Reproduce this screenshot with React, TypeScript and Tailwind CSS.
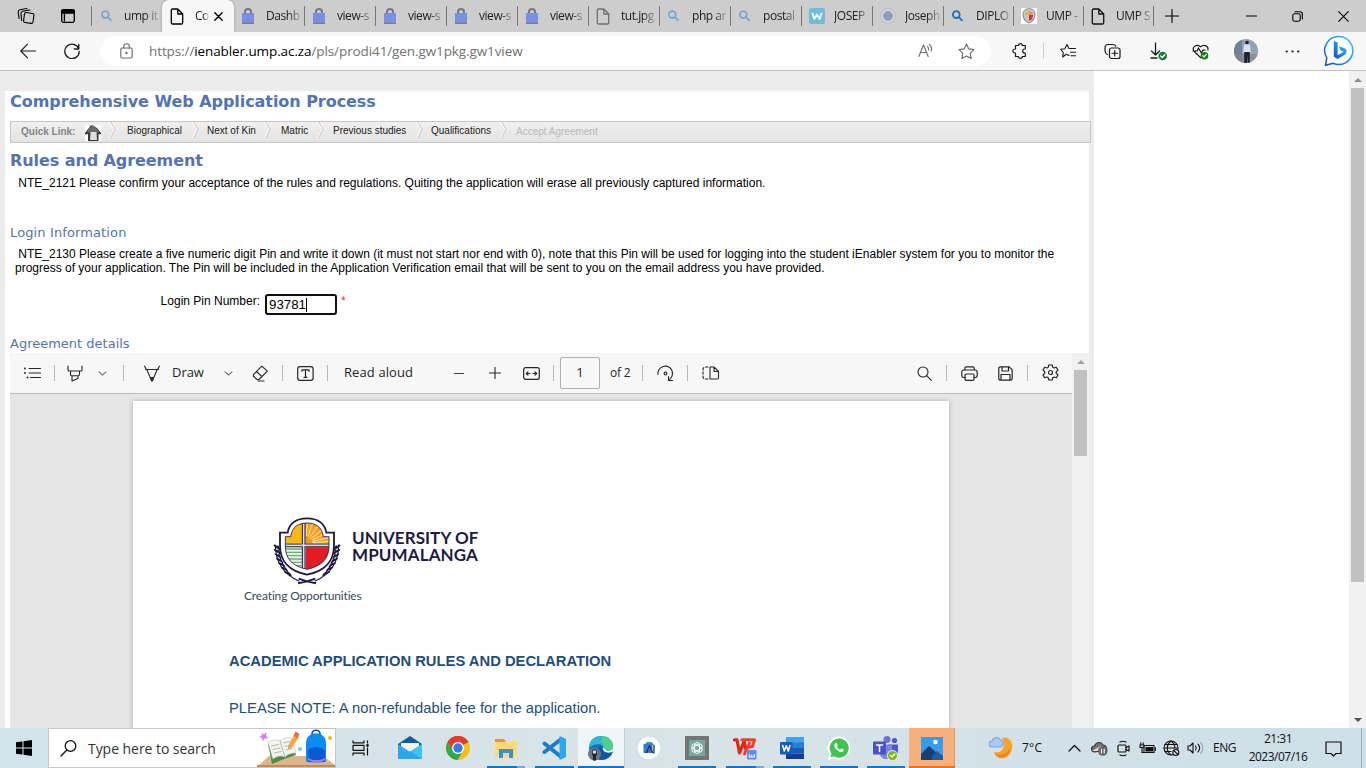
import React from "react";

type IcProps = { w: number; h?: number; vb?: string; className?: string; sw?: number; children: React.ReactNode };

const Ic = ({ w, h, vb, className = "", sw = 1.1, children }: IcProps) => (
  <svg
    width={w}
    height={h ?? w}
    viewBox={vb ?? `0 0 ${w} ${h ?? w}`}
    fill="none"
    stroke="currentColor"
    strokeWidth={sw}
    strokeLinecap="round"
    strokeLinejoin="round"
    className={`block shrink-0 ${className}`}
  >
    {children}
  </svg>
);

/* ---------- Tab strip ---------- */

const SearchFav = ({ color }: { color: string }) => (
  <Ic w={14} sw={1.8} className={color}>
    <circle cx="5.3" cy="5.6" r="3.4" />
    <path d="M8.1 8.4l2.9 2.9" />
  </Ic>
);
const BagFav = () => (
  <Ic w={14} h={17}>
    <path d="M4 6V4a3 3 0 0 1 6 0v2" stroke="#76767c" strokeWidth="2" />
    <rect x="1" y="5" width="12" height="9.5" fill="#7690e4" stroke="none" />
    <rect x="1" y="14.3" width="12" height="1.7" fill="#7d7d84" stroke="none" />
  </Ic>
);
const PageFav = ({ className = "" }: { className?: string }) => (
  <Ic w={14} h={17} sw={1.3} className={className}>
    <path d="M1.3 2.3a1.300 1.300 0 0 1 1.300-1.300h5.200L12.700 6v8.700a1.300 1.300 0 0 1-1.300 1.300H2.600a1.300 1.300 0 0 1-1.300-1.300z M7.800 1.200V6h4.700" />
  </Ic>
);
const WFav = () => (
  <Ic w={16} sw={1.9}>
    <rect width="16" height="16" rx="2" fill="#74bbd9" stroke="none" />
    <path d="M3.500 5.500l1.800 5.500L8 6.500l2.700 4.500 1.800-5.500" stroke="#e8f6fb" />
  </Ic>
);
const GlobeFav = () => (
  <Ic w={16}>
    <circle cx="8" cy="8" r="7.2" fill="#dcdcdc" stroke="#b4bcc4" />
    <circle cx="8" cy="8" r="5" fill="#8aa0b8" stroke="none" />
  </Ic>
);
const CrestFav = () => (
  <Ic w={16}>
    <rect width="16" height="16" fill="#fff" stroke="none" />
    <path d="M2 6c0-7 12-7 12 0 0 6-3 8-6 9-3-1-6-3-6-9z" fill="#c9c6cc" stroke="#8d8ba0" />
    <path d="M8 3v4H4c0-3 2-4 4-4z" fill="#e8b04a" stroke="none" />
    <path d="M8 7h4c0 4-2 5-4 6z" fill="#e0302c" stroke="none" />
    <path d="M8 3c2 0 4 1 4 4H8z" fill="#f0935a" stroke="none" />
  </Ic>
);

type Tab = { icon: React.ReactNode; text: string; w: string };
const tabs: Tab[] = [
  { icon: <BagFav />, text: "Dashb", w: "w-[71px]" },
  { icon: <BagFav />, text: "view-s", w: "w-[71px]" },
  { icon: <BagFav />, text: "view-s", w: "w-[71px]" },
  { icon: <BagFav />, text: "view-s", w: "w-[71px]" },
  { icon: <BagFav />, text: "view-s", w: "w-[71px]" },
  { icon: <PageFav className="text-[#6f6f6f]" />, text: "tut.jpg", w: "w-[71px]" },
  { icon: <SearchFav color="text-[#7ba7cc]" />, text: "php ar", w: "w-[71px]" },
  { icon: <SearchFav color="text-[#7ba7cc]" />, text: "postal", w: "w-[71px]" },
  { icon: <WFav />, text: "JOSEP", w: "w-[71px]" },
  { icon: <GlobeFav />, text: "Joseph", w: "w-[71px]" },
  { icon: <SearchFav color="text-[#1a6fc4]" />, text: "DIPLO", w: "w-[70px]" },
  { icon: <CrestFav />, text: "UMP -", w: "w-[70px]" },
  { icon: <PageFav className="text-[#111]" />, text: "UMP S", w: "w-[70px]" },
];

const fade = "[mask-image:linear-gradient(to_right,#000_60%,transparent_105%)]";

const TabStrip = () => (
  <div className="flex h-8 items-stretch bg-[#cdcdcd] text-[12px] tracking-[-0.45px] text-[#222]">
    <div className="flex w-[91px] items-center text-black">
      <Ic w={18} className="ml-[17px]" sw={1.1}>
        <rect x="7" y="6" width="9.5" height="10" rx="1.6" transform="rotate(8 12 11)" />
        <path d="M4.6 13.5L4 6.500c0-1.200.5-1.900 1.600-2.200l7.400-1.300M2 11.500L1.200 5c0-1.200.5-1.900 1.600-2.200L10 1.500" />
      </Ic>
      <Ic w={14} h={14} className="ml-[26px]" sw={1.300}>
        <rect x=".7" y=".7" width="12.600" height="12.600" rx="1.500" />
        <path d="M.7 1.500h12.600v2.700H.7z" fill="currentColor" />
        <path d="M3.400 5v7" />
      </Ic>
    </div>
    <div className="flex w-[71px] items-center">
      <div className="h-5 w-px bg-[#777]" />
      <div className="ml-[8px] w-[14px]"><SearchFav color="text-[#7ba7cc]" /></div>
      <div className={`ml-[10px] w-[35px] whitespace-nowrap ${fade}`}>ump it</div>
    </div>
    <div className="flex w-[72px] items-center rounded-t-[7px] bg-[#f7f7f7] shadow-[0_0_3px_rgba(0,0,0,0.25)]">
      <div className="ml-2 w-[14px] text-black"><PageFav /></div>
      <div className={`ml-[11px] w-[14px] whitespace-nowrap ${fade}`}>Co</div>
      <Ic w={9} className="ml-[5px] text-black" sw={1.400}>
        <path d="M.8.8l7.400 7.400M8.200.8L.8 8.200" />
      </Ic>
    </div>
    {tabs.map((t, i) => (
      <div key={i} className={`flex shrink-0 items-center ${t.w}`}>
        <div className="ml-[7px] flex w-[16px] shrink-0">{t.icon}</div>
        <div className={`ml-[9px] w-[36px] shrink-0 whitespace-nowrap ${fade}`}>{t.text}</div>
        <div className="ml-auto h-5 w-px bg-[#777]" />
      </div>
    ))}
    <div className="flex flex-1 items-center text-black">
      <Ic w={14} className="ml-[11px]"><path d="M7 .5v13M.5 7h13" /></Ic>
      <Ic w={11} h={2} className="ml-[67px]"><path d="M.5 1h10" /></Ic>
      <Ic w={11} className="ml-[35px]">
        <rect x=".8" y="2.800" width="7.400" height="7.400" rx="1.600" />
        <path d="M3 .8h5a2.300 2.300 0 0 1 2.300 2.300V8" />
      </Ic>
      <Ic w={11} className="ml-[35px]"><path d="M.7.7l9.600 9.600M10.300.7L.7 10.300" /></Ic>
    </div>
  </div>
);

/* ---------- Address bar ---------- */

const AddressBar = () => (
  <div className="flex h-[39px] items-center border-b border-[#c2c2c2] bg-[#f7f7f7] text-[#1a1a1a]">
    <Ic w={16} className="ml-[20px]"><path d="M15.500 8H.8M7.500 1.200L.8 8l6.700 6.800" /></Ic>
    <Ic w={16} className="ml-[28px]" sw={1.300}>
      <path d="M14.800 6A7.200 7.200 0 1 0 15.200 8.300M14.800 1.500V6h-4.500" />
    </Ic>
    <div className="ml-[20px] flex h-[30px] w-[891px] items-center rounded-full bg-white">
      <Ic w={13} h={16} className="ml-[20px] text-[#666]">
        <rect x=".8" y="5" width="11.400" height="10" rx="1.500" />
        <path d="M3.700 5V3.500a2.800 2.800 0 0 1 5.600 0V5" />
        <circle cx="6.500" cy="10" r=".6" fill="currentColor" />
      </Ic>
      <div className="ml-[16px] whitespace-nowrap text-[13.500px] leading-[18px] tracking-[-0.1px] text-[#717171]">
        https://<span className="text-black">ienabler.ump.ac.za</span>/pls/prodi41/gen.gw1pkg.gw1view
      </div>
      <Ic w={17} h={16} className="ml-auto text-[#6b6b6b]">
        <path d="M.8 13.500L5.500 2l4.700 11.500M2.500 9.500h6M9.500 3.500c1 .8 1.300 2 1 3.500M11.300 1.500c2 1.500 2.600 4 1.800 6.500" />
      </Ic>
      <Ic w={17} className="ml-[23px] mr-[16px] text-[#6b6b6b]">
        <path d="M8.500 1l2.300 4.900 5.200.7-3.800 3.700.9 5.300-4.600-2.500-4.600 2.500.9-5.300L1 6.600l5.200-.7z" />
      </Ic>
    </div>
    <Ic w={16} className="ml-[21px]" sw={1.200}>
      <path d="M3.500 2.500h3a1.900 1.900 0 0 1 3.800 0h3V6h-.6a2 2 0 0 0 0 4h.6v3.500h-3a1.900 1.900 0 0 1-3.800 0h-3V10h-.6a2 2 0 0 1 0-4h.6z" />
    </Ic>
    <div className="ml-[15px] h-4 w-px bg-[#cfcfcf]" />
    <Ic w={17} className="ml-[16px]">
      <path d="M9 12.500L6.300 11.200 2.700 14l.6-4.500L.8 6.300l4-.6L7 1.500l2 4h6.500M10.500 9.200h5.200M11 12.800h4.700" />
    </Ic>
    <Ic w={17} className="ml-[27px]" sw={1.200}>
      <rect x="5.500" y="5" width="10.500" height="10.500" rx="2" />
      <path d="M10.750 7.500v5.500M8 10.250h5.500M3.300 11.500C1.500 10.500 1 9 1 7.500V4.500A3 3 0 0 1 4 1.500h5c1.500 0 2.300.8 2.800 1.800" />
    </Ic>
    <Ic w={18} h={19} className="ml-[29px]" sw={1.300}>
      <path d="M5.500 1v12M1.500 9l4 4 4-4M1 16h6" />
      <circle cx="12.700" cy="14" r="4.300" fill="#15803d" stroke="none" />
      <path d="M10.700 14l1.500 1.500 2.500-2.800" stroke="#fff" />
    </Ic>
    <Ic w={18} h={17} className="ml-[24px]" sw={1.200}>
      <path d="M8.500 14.500L2 8.300C-.5 4.500 4 .5 8.500 3.800 12.500.5 17 3.500 15.800 7M1 8h4l1.500-3 2.800 5 1.500-2.800H13" />
      <circle cx="12.500" cy="12.700" r="3.800" fill="#107c10" stroke="none" />
      <path d="M10.800 12.700l1.200 1.300 2.300-2.600" stroke="#fff" />
    </Ic>
    <Ic w={24} className="ml-[24px] rounded-full">
      <rect width="24" height="24" fill="#8fa3b6" stroke="none" />
      <path d="M0 0h8v24H0z" fill="#6f8296" stroke="none" />
      <path d="M0 15h24v9H0z" fill="#8a8680" stroke="none" opacity=".6" />
      <circle cx="13" cy="3.500" r="1.800" fill="#251f26" stroke="none" />
      <path d="M10 5.500h6l.8 8.500H9.300z" fill="#d7e2f2" stroke="none" />
      <path d="M10.200 13h5.600v11h-2.100v-8l-.8 8h-2.700z" fill="#1b2135" stroke="none" />
    </Ic>
    <Ic w={15} h={3} className="ml-[27px]"><path d="M1.700 1.500h.1M7.500 1.500h.1M13.200 1.500h.1" strokeWidth="2.200" /></Ic>
    <Ic w={32} className="ml-[23px]">
      <defs>
        <linearGradient id="bg1" x1="0" y1="1" x2="1" y2="0">
          <stop offset="0" stopColor="#1b48c4" /><stop offset=".5" stopColor="#1e8ee6" /><stop offset="1" stopColor="#3cc7ee" />
        </linearGradient>
      </defs>
      <path d="M16.500 1.500a14 14 0 1 1-6.500 26.700L2.500 30.300l1.300-7.500A14 14 0 0 1 16.500 1.500z" fill="#fff" stroke="url(#bg1)" strokeWidth="1.500" />
      <path d="M10.800 6l3.900 1.600v12.600l6-3.400-3-1.400-1.700-4.200 6 2.400c2.200 1.300 2.100 4.500.2 5.800l-7.500 4.700-3.900-2.400z" fill="url(#bg1)" stroke="none" />
    </Ic>
  </div>
);

/* ---------- Web page ---------- */

const Crumb = () => (
  <Ic w={8} h={16} className="mb-[5px]" sw={1}>
    <path d="M1.500.5l4.500 7-4.500 7.500" stroke="#fff" transform="translate(-1 0)" />
    <path d="M2 .5l4 7-4 7.500" stroke="#c9c9c9" />
  </Ic>
);

const crumbs = [
  { text: "Biographical", w: "w-[65px]" },
  { text: "Next of Kin", w: "w-[57px]" },
  { text: "Matric", w: "w-[36px]" },
  { text: "Previous studies", w: "w-[83px]" },
  { text: "Qualifications", w: "w-[69px]" },
];
const gaps = ["ml-[10px]", "ml-[7px]", "ml-[9px]", "ml-[8px]", "ml-[7px]"];

const Sep = ({ className }: { className: string }) => <div className={`h-4 w-px shrink-0 bg-[#b9b9b9] ${className}`} />;
const Chev = ({ className }: { className: string }) => (
  <Ic w={9} h={5} className={className}><path d="M1 .8l3.500 3.200L8 .8" stroke="#777" /></Ic>
);

const PdfToolbar = () => (
  <div className="flex h-[41px] shrink-0 items-center border-b border-[#b9b9b9] bg-[#f7f7f7] text-[13px] text-[#262626]">
    <Ic w={18} h={12} className="ml-[14px]">
      <path d="M5 1.500h11.500M5 6h11.500M6.500 10.500H16.500" />
      <path d="M.9 1.500H1M.9 6H1M3.500 10.500h.1" strokeWidth="1.800" />
    </Ic>
    <Sep className="ml-[12px]" />
    <Ic w={16} h={17} className="ml-[12px]">
      <path d="M1 1v4c0 .6.400 1 1 1h12c.6 0 1-.4 1-1V1M3.500 6v3.500c0 .8.4 1.200 1.200 1.200h6.600c.8 0 1.200-.4 1.200-1.200V6M5 11v5l6-2.500V11" />
    </Ic>
    <Chev className="ml-[15px]" />
    <Sep className="ml-[16px]" />
    <Ic w={16} h={17} className="ml-[20px]">
      <path d="M.6 1.200l1.800 3.300M15.400 1.200l-1.800 3.300M1.500 4.500h13M2.800 4.500L7.500 15.500h1L13.200 4.500" />
      <path d="M6.500 12.500h3L8.300 16h-.6z" fill="#333" />
    </Ic>
    <div className="ml-[12px] w-[33px] whitespace-nowrap tracking-[-0.050px]">Draw</div>
    <Chev className="ml-[19px]" />
    <Ic w={17} className="ml-[19px]">
      <path d="M1.500 9.500L9.800 1.200l5.500 5L7 14.500H5L1.300 11zM4.500 6.500l5.500 5.200M6 16h6" />
    </Ic>
    <Sep className="ml-[13px]" />
    <Ic w={17} h={15} className="ml-[14px]" sw={1.200}>
      <rect x=".7" y=".7" width="15.400" height="13.600" rx="2.300" />
      <path d="M5 5.300V3.800h7v1.500M8.500 3.800v7.500M7 11.300h3" />
    </Ic>
    <Sep className="ml-[13px]" />
    <div className="ml-[16px] w-[70px] whitespace-nowrap tracking-[0.100px]">Read aloud</div>
    <div className="ml-[40px] h-px w-[10px] bg-[#444]" />
    <Ic w={12} className="ml-[25px]"><path d="M6 .5v11M.5 6h11" /></Ic>
    <Ic w={17} h={13} className="ml-[22px]" sw={1.200}>
      <rect x=".7" y=".7" width="15.600" height="11.600" rx="2" />
      <path d="M7 6.500H3.500M5 4.800L3.300 6.500 5 8.200M10 6.500h3.500M12 4.800l1.700 1.700L12 8.200" />
    </Ic>
    <Sep className="ml-[13px]" />
    <div className="ml-[6px] flex h-8 w-10 items-center justify-center rounded-[2px] border border-[#b0b0b0]">1</div>
    <div className="ml-[10px] w-[22px] whitespace-nowrap text-[12px] tracking-[-0.200px]">of 2</div>
    <Sep className="ml-[10px]" />
    <Ic w={17} className="ml-[14px]">
      <path d="M1 9.500A7.300 7.300 0 1 1 12 14.700M11.500 11.500v4h4" />
      <circle cx="8.500" cy="8.500" r="1.400" />
    </Ic>
    <Sep className="ml-[13px]" />
    <Ic w={18} h={14} className="ml-[14px]">
      <path d="M6 1H3.500A2.300 2.300 0 0 0 1 3.500v7A2.300 2.300 0 0 0 3.500 13H6" strokeDasharray="2.500 1.800" />
      <path d="M8 1h4l4.500 4.500V11.500a1.500 1.500 0 0 1-1.500 1.500H8zM12 1v4.500h4.500" />
    </Ic>
    <Ic w={15} className="ml-auto">
      <circle cx="6" cy="6" r="5" /><path d="M9.700 9.700l4.600 4.600" />
    </Ic>
    <Sep className="ml-[14px]" />
    <Ic w={17} h={15} className="ml-[14px]" sw={1.200}>
      <path d="M4 11.500H2.500A1.800 1.800 0 0 1 .8 9.700V6a2 2 0 0 1 2-2h11.400a2 2 0 0 1 2 2v3.700a1.800 1.800 0 0 1-1.700 1.800H13M3.800 4V2.200C3.800 1.300 4.300.8 5.200.8h6.600c.9 0 1.400.5 1.400 1.400V4" />
      <rect x="4" y="8" width="9" height="6.300" rx="1" />
    </Ic>
    <Ic w={15} className="ml-[20px]" sw={1.200}>
      <path d="M2.500.8h8.700l3 3v8.700a1.700 1.700 0 0 1-1.700 1.700h-10A1.700 1.700 0 0 1 .8 12.500v-10A1.700 1.700 0 0 1 2.500.8zM4 1v4h6.500V1M3 14V8.500h9V14" />
    </Ic>
    <Sep className="ml-[14px]" />
    <Ic w={17} className="ml-[14px] mr-[13px] mb-[2px]" sw={1.200}>
      <circle cx="8.500" cy="8.500" r="2" />
      <path d="M6.800 1h3.400l.5 2.200 1.300.8 2.300-.8 1.700 2.900-1.800 1.600v1.600l1.800 1.600-1.700 2.900-2.300-.8-1.300.8-.5 2.200H6.800l-.5-2.200-1.300-.8-2.300.8L1 10.900l1.800-1.600V7.700L1 6.100l1.700-2.900L5 4l1.300-.8z" />
    </Ic>
  </div>
);

const leaves = [0, 1, 2, 3, 4, 5, 6];
const Crest = () => (
  <svg width="72" height="72" viewBox="153 45 216 216" fill="none" className="block shrink-0">
    <path d="M166 134C166 184 190 222 238 244M356 134C356 184 332 222 284 244" stroke="#1d1a45" strokeWidth="3.500" />
    {leaves.map((i) => {
      const y = 140 + i * 13;
      const x = 168 + i * i * 0.9;
      return (
        <g key={i} fill="#1d1a45">
          <ellipse cx={x} cy={y} rx="9" ry="3.200" transform={`rotate(${38 - i * 3} ${x} ${y})`} />
          <ellipse cx={x + 8} cy={y + 4} rx="9" ry="3" transform={`rotate(${65 - i * 3} ${x + 8} ${y + 4})`} />
          <ellipse cx={522 - x} cy={y} rx="9" ry="3.200" transform={`rotate(${-38 + i * 3} ${522 - x} ${y})`} />
          <ellipse cx={514 - x} cy={y + 4} rx="9" ry="3" transform={`rotate(${-65 + i * 3} ${514 - x} ${y + 4})`} />
        </g>
      );
    })}
    <path d="M180 98H203C208 68 232 55 261 55C290 55 314 68 319 98H342V135C342 182 320 212 261 224C202 212 180 182 180 135Z" fill="#fff" stroke="#1d1a45" strokeWidth="5.500" />
    <clipPath id="sh"><path d="M196 110H212C216 80 236 69 261 69C286 69 306 80 310 110H327V138C327 176 306 198 261 208C216 198 196 176 196 138Z" /></clipPath>
    <g clipPath="url(#sh)">
      <path d="M190 60H246V130H190z" fill="#fbb811" />
      <path d="M254 60H332V130H254z" fill="#f6a21b" />
      <path d="M256 130L262 66M256 130L278 70M256 130L294 78M256 130L308 88M256 130L318 100M256 130L328 112M256 130L330 124" stroke="#fff0c8" strokeWidth="2.600" />
      <path d="M256 130V108A22 22 0 0 1 278 130z" fill="#f79a1c" />
      <path d="M190 142H246V212H190z" fill="#e4efe2" />
      <path d="M190 147H246M190 157H246M190 167H246M190 177H246M190 187H246M190 197H246" stroke="#76a883" strokeWidth="4" />
      <path d="M257 142H332V212H257z" fill="#e31b23" />
      <path d="M251 60V212M190 136H332" stroke="#1d1a45" strokeWidth="11" />
      <path d="M251 60V212M190 136H332" stroke="#dcdde6" strokeWidth="5" />
    </g>
    <path d="M196 110H212C216 80 236 69 261 69C286 69 306 80 310 110H327V138C327 176 306 198 261 208C216 198 196 176 196 138Z" stroke="#1d1a45" strokeWidth="2.500" />
    <path d="M234 250Q261 246 286 236M288 250Q261 246 236 236" stroke="#1d1a45" strokeWidth="6" />
  </svg>
);

const WebPage = () => (
  <div className="flex h-[657px] bg-white">
    <div className="h-full w-[1094px] overflow-hidden bg-[#ececec] pl-[5px] pt-[20px]">
      <div className="flex h-[637px] w-[1084px] flex-col bg-white pl-[5px] text-black">
        <h1 className="h-[30px] whitespace-nowrap pt-px font-['DejaVu_Sans',sans-serif] text-[16px] font-bold leading-[20px] tracking-[-0.050px] text-[#5473b3]">
          Comprehensive Web Application Process
        </h1>
        <div className="flex h-[22px] w-[1081px] items-center border border-[#c6c6c6] bg-gradient-to-b from-[#f1efef] to-[#e3e3e2] text-[10px] leading-[12px] text-[#222]">
          <div className="ml-[10px] w-[64px] whitespace-nowrap font-bold text-[#858585]">Quick Link:</div>
          <Ic w={16} className="mt-[2px]">
            <rect width="16" height="16" fill="#fff" stroke="none" />
            <path d="M0 8L5 1.500V.5h3l4 2.500 4 5v1.300h-2.500V16H3V9.300H0z" fill="#383838" stroke="none" />
            <path d="M4 3l4-2.500L12 4l2 3.500H2z" fill="#6b6b6b" stroke="none" />
            <path d="M5.500 7h6l.5 8h-7z" fill="#dedede" stroke="none" />
          </Ic>
          <div className="ml-[8px]"><Crumb /></div>
          {crumbs.map((c, i) => (
            <React.Fragment key={c.text}>
              <div className={`mb-[2px] shrink-0 whitespace-nowrap ${gaps[i]} ${c.w}`}>{c.text}</div>
              <Crumb />
            </React.Fragment>
          ))}
          <div className="ml-[8px] whitespace-nowrap text-[#b9b9b9]">Accept Agreement</div>
        </div>
        <h2 className="mt-[8px] h-[25px] whitespace-nowrap font-['DejaVu_Sans',sans-serif] text-[16px] font-bold leading-[20px] tracking-[-0.080px] text-[#5473b3]">
          Rules and Agreement
        </h2>
        <p className="h-[49px] whitespace-nowrap pl-[5px] text-[12px] leading-[14px]">
          &nbsp;NTE_2121 Please confirm your acceptance of the rules and regulations. Quiting the application will erase all previously captured information.
        </p>
        <h3 className="h-[22px] whitespace-nowrap font-['DejaVu_Sans',sans-serif] text-[13px] leading-[16px] tracking-[0.120px] text-[#5473b3]">Login Information</h3>
        <p className="h-[47px] whitespace-nowrap pl-[5px] text-[12px] leading-[14px]">
          &nbsp;NTE_2130 Please create a five numeric digit Pin and write it down (it must not start nor end with 0), note that this Pin will be used for logging into the student iEnabler system for you to monitor the
          <br />
          progress of your application. The Pin will be included in the Application Verification email that will be sent to you on the email address you have provided.
        </p>
        <div className="flex h-[42px] items-start text-[12px] leading-[14px]">
          <div className="w-[250px] whitespace-nowrap text-right">Login Pin Number:</div>
          <div className="ml-[5px] flex h-[21px] w-[72px] items-center rounded-[3px] border-2 border-[#101010] bg-white pl-[2px] text-[13.300px]">
            93781<span className="h-[14px] w-px bg-black" />
          </div>
          <div className="ml-[4px] text-[#e8343c]">*</div>
        </div>
        <h3 className="h-[17px] whitespace-nowrap font-['DejaVu_Sans',sans-serif] text-[13px] leading-[16px] text-[#5473b3]">Agreement details</h3>
        <div className="flex h-[375px] w-[1079px]">
          <div className="flex w-[1062px] flex-col overflow-hidden bg-[#e6e6e6] font-['Open_Sans','Noto_Sans',sans-serif]">
            <PdfToolbar />
            <div className="ml-[123px] mt-[7px] h-[400px] w-[816px] shrink-0 bg-white pl-[96px] shadow-[0_0_5px_rgba(0,0,0,0.25)]">
              <div className="flex h-[186px] pl-[42px] pt-[114px]">
                <Crest />
                <div className="ml-[9px] mt-[14px] flex flex-col whitespace-nowrap font-['Lato',sans-serif] text-[17px] font-bold leading-[17px] text-[#1d1a45]">
                  <div className="tracking-[0.060px]">UNIVERSITY OF</div>
                  <div className="tracking-[0.120px]">MPUMALANGA</div>
                </div>
              </div>
              <div className="h-[66px] whitespace-nowrap pl-[15px] font-['Lato',sans-serif] text-[12px] leading-[17px] tracking-[-0.150px] text-[#3a4860]">Creating Opportunities</div>
              <div className="h-[47px] whitespace-nowrap font-['Liberation_Sans',sans-serif] text-[14.780px] font-bold leading-[17px] text-[#1f4e79]">
                ACADEMIC APPLICATION RULES AND DECLARATION
              </div>
              <div className="whitespace-nowrap font-['Liberation_Sans',sans-serif] text-[14.750px] leading-[17px] text-[#1f4e79]">
                PLEASE NOTE: A non-refundable fee for the application.
              </div>
            </div>
          </div>
          <div className="flex w-[17px] flex-col items-center bg-[#f1f1f1]">
            <div className="flex h-[17px] items-center">
              <Ic w={8} h={4}><path d="M0 4L4 0l4 4z" fill="#a3a3a3" stroke="none" /></Ic>
            </div>
            <div className="h-[86px] w-[13px] bg-[#c1c1c1]" />
          </div>
        </div>
      </div>
    </div>
    <div className="flex-1" />
    <div className="flex w-[17px] flex-col items-center bg-[#f1f1f1]">
      <div className="flex h-[17px] items-center"><Ic w={8} h={4}><path d="M0 4L4 0l4 4z" fill="#8c8c8c" stroke="none" /></Ic></div>
      <div className="h-[494px] w-[13px] bg-[#c1c1c1]" />
      <div className="mt-auto flex h-[17px] items-center"><Ic w={8} h={4}><path d="M0 0h8L4 4z" fill="#505050" stroke="none" /></Ic></div>
    </div>
  </div>
);

/* ---------- Taskbar ---------- */

const MailIcon = () => (
  <Ic w={24}>
    <g stroke="none">
      <path d="M0 8L12 0l12 8v5H0z" fill="#0c5ca8" />
      <path d="M3 7h18v9H3z" fill="#f4f4f4" />
      <path d="M0 8l12 8L24 8v15H0z" fill="#2ba7e8" />
      <path d="M0 23L24 8v15z" fill="#3fc3f5" />
      <path d="M0 23h24L12 15z" fill="#1f93dc" opacity=".6" />
    </g>
  </Ic>
);
const ChromeIcon = () => (
  <Ic w={24}>
    <g stroke="none">
      <circle cx="12" cy="12" r="12" fill="#fbc016" />
      <path d="M12 12L1.600 6A12 12 0 0 1 22.400 6z" fill="#e33b2e" />
      <path d="M1.600 6a12 12 0 0 0 10 18L17 15l-5-3-5 3z" fill="#2da94f" />
      <path d="M12 6h10.400A12 12 0 0 0 1.600 6L7 15z" fill="#e33b2e" />
      <circle cx="12" cy="12" r="6" fill="#fff" />
      <circle cx="12" cy="12" r="4.700" fill="#2f7de9" />
    </g>
  </Ic>
);
const FolderIcon = () => (
  <Ic w={22} h={20}>
    <g stroke="none">
      <path d="M0 1h9l2 2h10v5H0z" fill="#dd9f16" />
      <path d="M0 4h9l2-1h11v16H0z" fill="#fddc78" />
      <path d="M4 11h14v9h-4v-5H8v5H4z" fill="#3c8ed8" />
    </g>
  </Ic>
);
const CodeIcon = () => (
  <Ic w={24}>
    <path d="M2.500 7.500L18 20M2.500 16L18 4" stroke="#1c7fc4" strokeWidth="4" />
    <path d="M17.500 0L24 3v18l-6.500 3z" fill="#2ba8ee" stroke="none" />
  </Ic>
);
const EdgeIcon = () => (
  <Ic w={26} h={25}>
    <g stroke="none">
      <circle cx="13" cy="12" r="12" fill="#1670c0" />
      <path d="M1 12C1 4 7 0 13 0c7 0 12 5 12 10 0 4-3 6-6 6s-4-1-3-3c0-5-8-7-15-1z" fill="#2fb8d2" />
      <path d="M14 0c7 0 11 5 11 10 0 4-3 6-6 6s-4-1-3-3c1-3-1-6-4-7 3-1 3-4 2-6z" fill="#4fcf8d" />
      <path d="M16 14c0 2 3 3 6 2l3-1c-1 6-7 9-12 9-4-1-6-6-4-10 1-3 4-4 7-3-1 1-1 2 0 3z" fill="#1257a5" />
      <path d="M15 10.500c-1.500 5 4 7.500 9 5.500l2-1.500V10c-1 4-4 5.500-6.500 5-2-.4-3-2-4.500-4.500z" fill="#eef3f6" />
      <circle cx="6.500" cy="18" r="6.500" fill="#6c7684" />
      <path d="M4.500 13.500h4l.5 6H8v5H5v-5H4z" fill="#20242f" />
      <path d="M5 14.500h3v3H5z" fill="#d8dce6" />
    </g>
  </Ic>
);
const StudioIcon = () => (
  <Ic w={22}>
    <circle cx="11" cy="11" r="11" fill="#fff" stroke="none" />
    <path d="M7 8c0-4.500 8-4.500 9 0z" fill="#30a869" stroke="none" />
    <rect x="5.500" y="7" width="9" height="9" fill="#3478e0" stroke="none" />
    <path d="M8.500 15.500L11.500 8.500l3 7M16 8.500v7.500" stroke="#16324f" strokeWidth="1.300" />
  </Ic>
);
const GptIcon = () => (
  <Ic w={24}>
    <rect width="24" height="24" fill="#747474" stroke="none" />
    <rect x="4" y="4" width="16" height="16" fill="#74aa9c" stroke="none" />
    <g stroke="#fff" strokeWidth=".9">
      {[0, 60, 120].map((a) => (
        <rect key={a} x="9.500" y="6.500" width="5" height="11" rx="2.500" transform={`rotate(${a} 12 12)`} />
      ))}
    </g>
  </Ic>
);
const WpsIcon = () => (
  <Ic w={24} h={23}>
    <path d="M1.500 2.800h2.500l2.500 13L11 4.500l2 8" stroke="#e2261c" strokeWidth="3.300" />
    <path d="M9 2.800h12.500l-2 6.500-4 1.200M11.500 17l5-11" stroke="#f2402f" strokeWidth="3" />
    <rect x="14" y="13" width="9.500" height="9.500" rx="1" fill="#5c8ff0" stroke="none" />
    <path d="M16.300 17.500v2.500h5v-2.500M18.800 18v2" stroke="#fff" />
  </Ic>
);
const WordIcon = () => (
  <Ic w={24} h={22}>
    <g stroke="none">
      <path d="M6 0h18v6H6z" fill="#41a5ee" /><path d="M6 5.500h18V11H6z" fill="#2b7cd3" />
      <path d="M6 11h18v5.500H6z" fill="#185abd" /><path d="M6 16.500h18V22H6z" fill="#103f91" />
      <rect y="5" width="12.500" height="12.500" rx="1" fill="#185abd" />
    </g>
    <path d="M2.700 8.500l1.600 5.500 2-5.300 2 5.300L9.900 8.500" stroke="#fff" strokeWidth="1.500" />
  </Ic>
);
const WhatsIcon = () => (
  <Ic w={24} h={25}>
    <path d="M12 .5a11.500 11.500 0 1 1-5.300 21.800L.8 24l1.600-5.700A11.500 11.500 0 0 1 12 .5z" fill="#fff" stroke="none" />
    <path d="M12 2.500a9.600 9.600 0 1 1-4.800 17.800l-3.700 1 1-3.600A9.600 9.600 0 0 1 12 2.500z" fill="#3fc351" stroke="none" />
    <path d="M8 7.500c-1.500 1.500-.8 3.800 1.500 6s5 3.500 6.700 1.800c.5-.5.6-1.500.3-1.800l-2-1-1.300 1.300c-1.500-.4-3-2-3.400-3.300l1-1.200-1-2.100c-.5-.5-1.300-.2-1.800.3z" fill="#fff" stroke="none" />
  </Ic>
);
const TeamsIcon = () => (
  <Ic w={26} h={25}>
    <g stroke="none">
      <circle cx="14" cy="3.500" r="3.500" fill="#6a72d2" /><circle cx="21.500" cy="4.500" r="2.600" fill="#5059c9" />
      <path d="M15 8.500h10V16c0 4-5 5-7 2z" fill="#5059c9" /><path d="M7 8.500h12V17c0 8-12 8-12 0z" fill="#7b83eb" />
      <rect y="5.500" width="13" height="13" rx="1" fill="#4b53bc" />
      <circle cx="19.500" cy="19.500" r="5.500" fill="#dfe9ee" /><circle cx="19.500" cy="19.500" r="4.500" fill="#7fba00" />
    </g>
    <path d="M3.500 9h6M6.500 9v6.500M17.500 19.500l1.500 1.500 2.800-3" stroke="#fff" strokeWidth="1.500" />
  </Ic>
);
const PhotosIcon = () => (
  <Ic w={22} h={23}>
    <g stroke="none">
      <rect width="22" height="23" fill="#3a9be8" /><path d="M0 17L8 9l8 7 6 7H0z" fill="#173f78" />
      <path d="M11 19l5-5 6 5v4H11z" fill="#1c5da8" /><circle cx="14.500" cy="5" r="2.300" fill="#fff" />
    </g>
  </Ic>
);

const apps: { icon: React.ReactNode; cell: string; bar: string }[] = [
  { icon: <MailIcon />, cell: "w-[48px]", bar: "" },
  { icon: <ChromeIcon />, cell: "w-[48px]", bar: "" },
  { icon: <FolderIcon />, cell: "w-[48px]", bar: "w-[38px] bg-gradient-to-r from-[#0078d7] from-80% to-[#66aee8] to-80%" },
  { icon: <CodeIcon />, cell: "w-[48px]", bar: "w-[39px] bg-[#0078d7]" },
  { icon: <EdgeIcon />, cell: "w-[47px] border-r border-[#b9cbd3] bg-[#eef4f7]", bar: "w-[46px] bg-[#0078d7]" },
  { icon: <StudioIcon />, cell: "w-[48px]", bar: "" },
  { icon: <GptIcon />, cell: "w-[48px]", bar: "w-[38px] bg-[#0078d7]" },
  { icon: <WpsIcon />, cell: "w-[47px]", bar: "w-[38px] bg-gradient-to-r from-[#0078d7] from-80% to-[#66aee8] to-80%" },
  { icon: <WordIcon />, cell: "w-[47px]", bar: "w-[38px] bg-[#0078d7]" },
  { icon: <WhatsIcon />, cell: "w-[47px]", bar: "w-[38px] bg-[#0078d7]" },
  { icon: <TeamsIcon />, cell: "w-[47px]", bar: "w-[38px] bg-[#0078d7]" },
  { icon: <PhotosIcon />, cell: "w-[46px] border-r border-[#df9560] bg-[#f6b07c]", bar: "w-[46px] bg-[#f7720c]" },
];

const SearchArt = () => (
  <Ic w={78} h={38}>
    <g stroke="none">
      <path d="M0 38L12 27h54l12 9v2z" fill="#dcb58d" /><path d="M0 36h78v2H0z" fill="#b88d64" />
      <path d="M11 15l12-3 12-1 4 15-12 4-12 5z" fill="#4e8d4c" />
      <path d="M11 13c5-2 9-3 12-1 3-3 8-4 11-3l5 15c-5 0-8 1-11 4-4-2-8-1-12 2z" fill="#f5f5f0" stroke="#b9bdb6" strokeWidth=".6" />
      <path d="M31 17l6-11 4.500 3-7 10-3.500 1z" fill="#f5a93c" /><path d="M36.500 6.500l2-4 4 2.500-2 4.500z" fill="#ec6a50" />
      <path d="M4 4l3 1.500L9.500 3l-.5 4 2.500 2-4 .5-1.500 3L5 9 2 8l3-1.500z" fill="#d97cf0" />
      <circle cx="43" cy="20" r="2" fill="#69d0ea" /><circle cx="73" cy="9" r="2" fill="#fdb515" />
      <path d="M49 14c0-13 20-13 20 0v18c0 2-20 2-20 0z" fill="#0a8cf8" />
      <path d="M51 22c2-5 14-5 17 0v11H51z" fill="#0a5ad0" /><path d="M51 29c5 3 12 3 17 0v2c-5 3-12 3-17 0z" fill="#a77df2" />
    </g>
    <path d="M55 5c0-5 8-5 8 0" stroke="#144fae" strokeWidth="1.500" />
    <path d="M23 12l5 16M14.500 17l7-1.500M16 20.500l7-1.500M17 24l7-1.500M26.500 14l6-1.500M28 17.500l6-1.500M29 21l6-1.500" stroke="#a2a6a5" strokeWidth=".8" />
  </Ic>
);

const Taskbar = () => (
  <div className="flex h-10 items-stretch bg-gradient-to-r from-[#d3e4ec] via-[#d8e4e7] to-[#cddfe8] text-[#111]">
    <div className="flex w-12 items-center">
      <Ic w={16} className="ml-[16px]">
        <path d="M0 2.300l6.500-.9v6.100H0zM7.500 1.200L16 0v7.500H7.500zM0 8.500h6.500v6.100L0 13.700zM7.500 8.500H16V16l-8.500-1.200z" fill="#000" stroke="none" />
      </Ic>
    </div>
    <div className="flex w-[288px] items-center border border-[#c6c6c6] bg-white">
      <Ic w={17} className="ml-[11px]" sw={1.300}><circle cx="10.500" cy="6" r="5.300" /><path d="M6.800 10L1 16" /></Ic>
      <div className="ml-[11px] whitespace-nowrap text-[14px] tracking-[-0.050px] text-[#333]">Type here to search</div>
      <div className="ml-auto"><SearchArt /></div>
    </div>
    <div className="flex w-[50px] items-center">
      <Ic w={17} h={16} className="ml-[16px]" sw={1.200}>
        <path d="M1 .8v2h11v-2M1 15.200v-2h11v2M1 5.300h11v5H1zM15.500.8v2M15.500 8v7" /><path d="M15.500 5v1" strokeWidth="2.300" />
      </Ic>
    </div>
    {apps.map((a, i) => (
      <div key={i} className={`flex shrink-0 flex-col items-center ${a.cell}`}>
        <div className="flex h-[38px] items-center pt-[2px]">{a.icon}</div>
        <div className={`h-[2px] ${a.bar}`} />
      </div>
    ))}
    <div className="flex flex-1 items-center">
      <Ic w={24} className="ml-[34px]">
        <path d="M13 2c9-3 14 9 7 17-5 6-14 3-15-3 8 2 13-6 8-14z" fill="#f6a327" stroke="none" />
        <path d="M6 17c5 4 12 1 15-5 1 9-11 14-15 5z" fill="#ef8221" stroke="none" />
        <path d="M3 11a3 3 0 0 1 0-6c1-4 7-5 8.500-1 3 0 4 6 .5 7z" fill="#a9c8f5" stroke="#7fa6e6" />
      </Ic>
      <div className="ml-[9px] w-[24px] whitespace-nowrap text-[12px] tracking-[0.200px]">7°C</div>
      <Ic w={13} h={8} className="ml-[22px]" sw={1.300}><path d="M1 7l5.500-5.500L12 7" /></Ic>
      <Ic w={17} h={15} className="ml-[10px]">
        <path d="M3.500 11a3 3 0 0 1 0-6C5 1 10 0 12 4c3 0 4 3 3.500 5z" fill="#777" stroke="#333" />
        <path d="M1 10l9-5 3 5z" fill="#ddd" stroke="none" />
        <circle cx="11.800" cy="10" r="4.800" fill="#666" stroke="none" /><path d="M10.500 8v4M13.200 8v4" stroke="#fff" />
      </Ic>
      <Ic w={13} h={17} className="ml-[9px]" sw={1.200}>
        <rect x="1" y="5" width="8" height="7" rx="1" /><path d="M9 7.500l3-1.500v5L9 9.500M3 2c2-1 4-1 6 0M3 15c2 1 4 1 6 0" />
      </Ic>
      <Ic w={17} h={13} className="ml-[9px]">
        <rect x="5" y="3.500" width="10" height="7" /><rect x="7" y="5.500" width="6.500" height="3.500" fill="#111" /><path d="M16.300 5.500v3M1 3h4v2.500H1zM1.800 3V.8M4.200 3V.8M3 6v4.500h2" />
      </Ic>
      <Ic w={17} className="ml-[7px]">
        <circle cx="8" cy="8" r="7" /><path d="M8 1c-5 4-5 10 0 14M8 1c3.500 2.500 4 5 3.800 7M1 8h13.500M2 4.500h12M2 11.500h6" />
        <circle cx="12.800" cy="12.500" r="3" fill="#d6e3e8" /><path d="M10.800 10.500l4 4" />
      </Ic>
      <Ic w={17} h={14} className="ml-[7px]">
        <path d="M1 5h2l3-3v10L3 9H1zM8.500 5c1 1.300 1 2.700 0 4M11 3.200c2 2.300 2 5.300 0 7.600" /><path d="M13.500 1.500c3 3.300 3 7.700 0 11" stroke="#8a9aa2" />
      </Ic>
      <div className="ml-[9px] w-[25px] whitespace-nowrap text-[12px] tracking-[-0.500px]">ENG</div>
      <div className="ml-[8px] w-[64px] whitespace-nowrap text-center text-[12px] leading-[18px] tracking-[-0.500px]">
        21:31
        <br />
        2023/07/16
      </div>
      <Ic w={17} h={16} className="ml-[15px] mt-px" sw={1.200}><path d="M1 1h15v11.500h-5L8.500 15 6 12.500H1z" /></Ic>
      <div className="ml-[19px] h-10 w-px bg-[#9fb3bd]" />
    </div>
  </div>
);

export default function App() {
  return (
    <div className="flex h-[768px] w-[1366px] flex-col overflow-hidden bg-white font-['Open_Sans','Noto_Sans',sans-serif]">
      <TabStrip />
      <AddressBar />
      <div className="font-['Liberation_Sans',Arial,sans-serif]"><WebPage /></div>
      <Taskbar />
    </div>
  );
}
